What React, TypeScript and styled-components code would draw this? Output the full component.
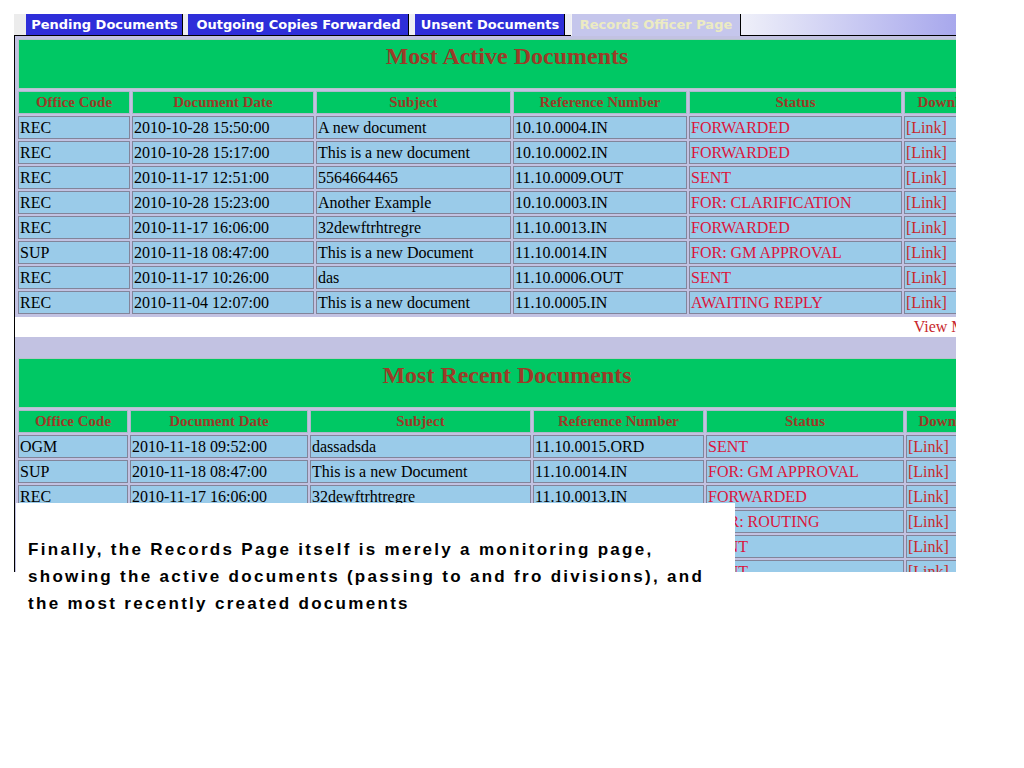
import styled, { createGlobalStyle } from "styled-components";

const GlobalStyle = createGlobalStyle`
  body {
    margin: 0;
    background: #ffffff;
  }
`;

type Row = [string, string, string, string, string];

const activeRows: Row[] = [
  ["REC", "2010-10-28 15:50:00", "A new document", "10.10.0004.IN", "FORWARDED"],
  ["REC", "2010-10-28 15:17:00", "This is a new document", "10.10.0002.IN", "FORWARDED"],
  ["REC", "2010-11-17 12:51:00", "5564664465", "11.10.0009.OUT", "SENT"],
  ["REC", "2010-10-28 15:23:00", "Another Example", "10.10.0003.IN", "FOR: CLARIFICATION"],
  ["REC", "2010-11-17 16:06:00", "32dewftrhtregre", "11.10.0013.IN", "FORWARDED"],
  ["SUP", "2010-11-18 08:47:00", "This is a new Document", "11.10.0014.IN", "FOR: GM APPROVAL"],
  ["REC", "2010-11-17 10:26:00", "das", "11.10.0006.OUT", "SENT"],
  ["REC", "2010-11-04 12:07:00", "This is a new document", "11.10.0005.IN", "AWAITING REPLY"],
];

const recentRows: Row[] = [
  ["OGM", "2010-11-18 09:52:00", "dassadsda", "11.10.0015.ORD", "SENT"],
  ["SUP", "2010-11-18 08:47:00", "This is a new Document", "11.10.0014.IN", "FOR: GM APPROVAL"],
  ["REC", "2010-11-17 16:06:00", "32dewftrhtregre", "11.10.0013.IN", "FORWARDED"],
  ["REC", "2010-11-17 15:40:00", "Routing test", "11.10.0012.IN", "FOR: ROUTING"],
  ["REC", "2010-11-17 12:51:00", "5564664465", "11.10.0009.OUT", "SENT"],
  ["REC", "2010-11-17 10:26:00", "das", "11.10.0006.OUT", "SENT"],
];

const headers = ["Office Code", "Document Date", "Subject", "Reference Number", "Status", "Download"];

const tabs = [
  { label: "Pending Documents", w: 157 },
  { label: "Outgoing Copies Forwarded", w: 221 },
  { label: "Unsent Documents", w: 150 },
  { label: "Records Officer Page", w: 170, active: true },
];

const Page = styled.div`
  position: relative;
  width: 1024px;
  height: 768px;
  background: #ffffff;
  font-family: "Liberation Serif", "Times New Roman", serif;
`;

// the screenshot of the page is cut off at the right and bottom
const Viewport = styled.div`
  width: 956px;
  height: 572px;
  overflow: hidden;
  box-sizing: border-box;
  padding: 14px 0 0 14px;
`;

const Frame = styled.div`
  width: 986px;
`;

const TabBar = styled.div`
  display: flex;
  align-items: flex-start;
  height: 22px;
  padding-left: 12px;
  background: linear-gradient(to right, #ececec 0%, #eeeff9 74%, #a6a6ec 96%);
  box-shadow: inset 0 -1px 0 #000000;
`;

const Tab = styled.div<{ $active?: boolean; $w: number }>`
  width: ${(p) => p.$w}px;
  box-sizing: border-box;
  height: ${(p) => (p.$active ? 22 : 21)}px;
  line-height: 21px;
  margin-right: 6px;
  font-family: "DejaVu Sans", Verdana, sans-serif;
  font-size: 13px;
  font-weight: bold;
  text-align: center;
  white-space: nowrap;
  color: ${(p) => (p.$active ? "#ecebc2" : "#ffffff")};
  background: ${(p) => (p.$active ? "#c5c6ec" : "#2e2ed9")};
  border-left: 1px solid ${(p) => (p.$active ? "#f4f4f4" : "#2e2ed9")};
  border-right: 1px solid #000000;

  &:first-child {
    margin-right: 5px;
  }
`;

const Content = styled.div`
  border-left: 1px solid #000000;
  background: #ffffff;
`;

const Panel = styled.div<{ $top: number }>`
  background: #c2c2e2;
  padding: ${(p) => p.$top}px 1px 1px 1px;
`;

const Table = styled.table`
  border-collapse: separate;
  border-spacing: 2px;
  table-layout: fixed;
  width: 982px;
`;

const Col = styled.col<{ $w: number }>`
  width: ${(p) => p.$w}px;
`;

const TitleCell = styled.th`
  height: 50px;
  box-sizing: border-box;
  padding: 3px 0 0;
  vertical-align: top;
  background: #00c864;
  border: 1px solid #b6c4c8;
  color: #9b3b28;
  font-size: 24px;
  line-height: 26px;
  font-weight: bold;
  text-align: center;
`;

const HeadCell = styled.th`
  height: 23px;
  box-sizing: border-box;
  padding: 0 2px;
  background: #00c864;
  border: 1px solid #b0b8cc;
  color: #9b3b28;
  font-size: 15px;
  line-height: 19px;
  font-weight: bold;
  text-align: center;
  white-space: nowrap;
  overflow: hidden;
`;

const toneColor = {
  text: "#000000",
  status: "#dc143c",
  link: "#c8282c",
};

const Cell = styled.td<{ $tone: keyof typeof toneColor }>`
  height: 23px;
  box-sizing: border-box;
  padding: 0 2px 0 1px;
  background: #9acbe9;
  border: 1px solid #82849a;
  color: ${(p) => toneColor[p.$tone]};
  font-size: 16px;
  line-height: 19px;
  white-space: nowrap;
  overflow: hidden;
`;

const ViewMore = styled.div`
  height: 20px;
  line-height: 20px;
  text-align: right;
  padding-right: 14px;
  font-size: 16px;
  color: #c8282c;
`;

const Caption = styled.div`
  position: absolute;
  left: 16px;
  top: 503px;
  width: 719px;
  height: 140px;
  box-sizing: border-box;
  padding: 33px 0 0 12px;
  background: #ffffff;
  font-family: "Liberation Sans", Arial, sans-serif;
  font-size: 17px;
  font-weight: bold;
  line-height: 27px;
  letter-spacing: 2.3px;
  color: #000000;
  white-space: nowrap;
`;

const DocTable = ({ title, widths, rows }: { title: string; widths: number[]; rows: Row[] }) => (
  <Table>
    <colgroup>
      {widths.map((w, i) => (
        <Col key={i} $w={w} />
      ))}
    </colgroup>
    <thead>
      <tr>
        <TitleCell colSpan={6}>{title}</TitleCell>
      </tr>
      <tr>
        {headers.map((h) => (
          <HeadCell key={h}>{h}</HeadCell>
        ))}
      </tr>
    </thead>
    <tbody>
      {rows.map((r, i) => (
        <tr key={i}>
          <Cell $tone="text">{r[0]}</Cell>
          <Cell $tone="text">{r[1]}</Cell>
          <Cell $tone="text">{r[2]}</Cell>
          <Cell $tone="text">{r[3]}</Cell>
          <Cell $tone="status">{r[4]}</Cell>
          <Cell $tone="link">[Link]</Cell>
        </tr>
      ))}
    </tbody>
  </Table>
);

export default function App() {
  return (
    <Page>
      <GlobalStyle />
      <Viewport>
        <Frame>
          <TabBar>
            {tabs.map((t) => (
              <Tab key={t.label} $w={t.w} $active={t.active}>
                {t.label}
              </Tab>
            ))}
          </TabBar>
          <Content>
            <Panel $top={1}>
              <DocTable
                title="Most Active Documents"
                widths={[112, 182, 195, 174, 213, 92]}
                rows={activeRows}
              />
            </Panel>
            <ViewMore>View More</ViewMore>
            <Panel $top={19}>
              <DocTable
                title="Most Recent Documents"
                widths={[110, 178, 221, 171, 198, 90]}
                rows={recentRows}
              />
            </Panel>
          </Content>
        </Frame>
      </Viewport>
      <Caption>
        Finally, the Records Page itself is merely a monitoring page,
        <br />
        showing the active documents (passing to and fro divisions), and
        <br />
        the most recently created documents
      </Caption>
    </Page>
  );
}
